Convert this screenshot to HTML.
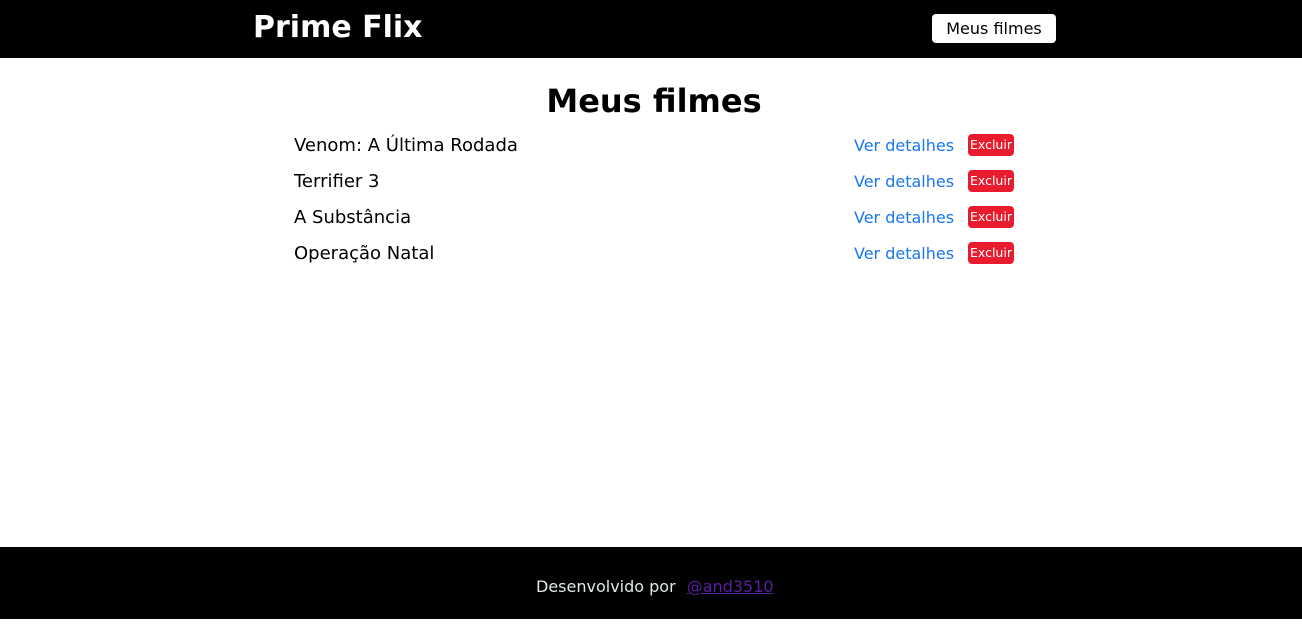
<!DOCTYPE html>
<html><head><style>
*{margin:0;padding:0;box-sizing:border-box}
body{width:1302px;height:619px;font-family:"DejaVu Sans",sans-serif;background:#fff;position:relative;overflow:hidden}
header{position:absolute;top:0;left:0;width:1302px;height:58px;background:#000}
.logo{position:absolute;left:253px;top:10px;color:#fff;font-weight:bold;font-size:30px}
.btn{position:absolute;left:932px;top:14px;width:124px;height:29px;background:#fff;border-radius:4px;font-size:16px;color:#000;text-align:center;line-height:29px}
h1{position:absolute;top:82px;left:3px;width:1302px;text-align:center;font-size:32px;font-weight:bold}
.row{position:absolute;left:294px;width:720px;height:24px}
.t{position:absolute;left:0;top:1px;font-size:18px;line-height:24px}
.v{position:absolute;left:560px;top:3px;font-size:16px;color:#1877f2;line-height:20px}
.x{position:absolute;left:674px;top:1px;width:46px;height:22px;background:#e81c2e;color:#fff;border-radius:4px;font-size:12.5px;text-align:center;line-height:22px}
footer{position:absolute;top:547px;left:0;width:1302px;height:72px;background:#000;color:#e0e8e8;font-size:16px;line-height:80px}
footer span{position:absolute;left:536px;top:0}
footer a{color:#5a1fa6;margin-left:6px;text-decoration:underline}
</style></head><body>
<header><div class="logo">Prime Flix</div><div class="btn">Meus filmes</div></header>
<h1>Meus filmes</h1>
<div class="row" style="top:133px"><span class="t">Venom: A Última Rodada</span><span class="v">Ver detalhes</span><span class="x">Excluir</span></div>
<div class="row" style="top:169px"><span class="t">Terrifier 3</span><span class="v">Ver detalhes</span><span class="x">Excluir</span></div>
<div class="row" style="top:205px"><span class="t">A Substância</span><span class="v">Ver detalhes</span><span class="x">Excluir</span></div>
<div class="row" style="top:241px"><span class="t">Operação Natal</span><span class="v">Ver detalhes</span><span class="x">Excluir</span></div>
<footer><span>Desenvolvido por <a>@and3510</a></span></footer>
</body></html>
